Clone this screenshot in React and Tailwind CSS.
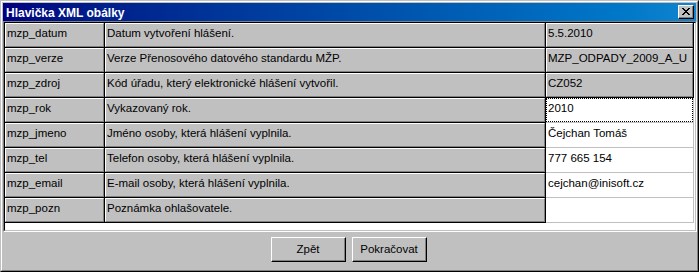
import React from "react";

const rows = [
  { k: "mzp_datum", d: "Datum vytvoření hlášení.", v: "5.5.2010", t: "fixed" },
  { k: "mzp_verze", d: "Verze Přenosového datového standardu MŽP.", v: "MZP_ODPADY_2009_A_U", t: "fixed" },
  { k: "mzp_zdroj", d: "Kód úřadu, který elektronické hlášení vytvořil.", v: "CZ052", t: "fixed" },
  { k: "mzp_rok", d: "Vykazovaný rok.", v: "2010", t: "focus" },
  { k: "mzp_jmeno", d: "Jméno osoby, která hlášení vyplnila.", v: "Čejchan Tomáš", t: "edit" },
  { k: "mzp_tel", d: "Telefon osoby, která hlášení vyplnila.", v: "777 665 154", t: "edit" },
  { k: "mzp_email", d: "E-mail osoby, která hlášení vyplnila.", v: "cejchan@inisoft.cz", t: "edit" },
  { k: "mzp_pozn", d: "Poznámka ohlašovatele.", v: "", t: "edit" },
];

function FixedCell({ w, children }) {
  return (
    <div className={`${w} h-[25px] border-r border-b border-black shrink-0`}>
      <div className="h-full bg-[#c0c0c0] border-t border-l border-t-white border-l-white border-r border-b border-r-[#808080] border-b-[#808080] pl-px pt-[2px] leading-[14px] whitespace-nowrap overflow-hidden">
        {children}
      </div>
    </div>
  );
}

function EditCell({ focus, children }) {
  return (
    <div className="w-[148px] h-[25px] border-r border-b border-[#c0c0c0] shrink-0 bg-white">
      {focus ? (
        <div className="h-full border border-dotted border-black pl-px pt-[2px] leading-[14px] whitespace-nowrap overflow-hidden">
          {children}
        </div>
      ) : (
        <div className="h-full pl-[2px] pt-[3px] leading-[14px] whitespace-nowrap overflow-hidden">
          {children}
        </div>
      )}
    </div>
  );
}

function Button({ children }) {
  return (
    <div className="w-[75px] h-[25px] border-t border-l border-t-white border-l-white border-r border-b border-r-black border-b-black">
      <div className="h-full border-r border-b border-r-[#808080] border-b-[#808080] flex items-center justify-center leading-[14px]">
        {children}
      </div>
    </div>
  );
}

function CloseGlyph() {
  const px = [
    [0, 0, 2], [6, 0, 2],
    [1, 1, 2], [5, 1, 2],
    [2, 2, 4],
    [3, 3, 2],
    [2, 4, 4],
    [1, 5, 2], [5, 5, 2],
    [0, 6, 2], [6, 6, 2],
  ];
  return (
    <svg width="8" height="7" viewBox="0 0 8 7" shapeRendering="crispEdges">
      {px.map(([x, y, w], i) => (
        <rect key={i} x={x} y={y} width={w} height={1} fill="#000" />
      ))}
    </svg>
  );
}

export default function App() {
  return (
    <div
      className="w-[699px] h-[272px] border border-t-[#c0c0c0] border-l-[#c0c0c0] border-r-black border-b-black text-[11.5px] text-black"
      style={{ fontFamily: '"Liberation Sans", Arial, sans-serif' }}
    >
      <div className="h-full border border-t-white border-l-white border-r-[#808080] border-b-[#808080] bg-[#c0c0c0] flex flex-col">
        {/* title bar */}
        <div className="ml-px mt-px w-[693px] h-[18px] shrink-0 bg-linear-to-r from-[#000080] to-[#1084d0] flex items-center justify-between pl-[3px] pr-[2px]">
          <span className="text-white font-bold text-[12px] leading-[18px] pt-px">Hlavička XML obálky</span>
          <div className="w-[16px] h-[14px] border-t border-l border-t-white border-l-white border-r border-b border-r-black border-b-black bg-[#c0c0c0]">
            <div className="h-full border-r border-b border-r-[#808080] border-b-[#808080] flex items-center justify-center pl-px">
              <CloseGlyph />
            </div>
          </div>
        </div>

        {/* grid */}
        <div className="ml-px w-[694px] h-[211px] shrink-0 border-t border-l border-t-[#808080] border-l-[#808080] border-r border-b border-r-white border-b-white">
          <div className="h-full border-t border-l border-t-black border-l-black border-r border-b border-r-[#c0c0c0] border-b-[#c0c0c0] bg-white flex flex-col">
            {rows.map((r) => (
              <div key={r.k} className="flex">
                <FixedCell w="w-[100px]">{r.k}</FixedCell>
                <FixedCell w="w-[441px]">{r.d}</FixedCell>
                {r.t === "fixed" ? (
                  <FixedCell w="w-[148px]">{r.v}</FixedCell>
                ) : (
                  <EditCell focus={r.t === "focus"}>{r.v}</EditCell>
                )}
              </div>
            ))}
          </div>
        </div>

        {/* buttons */}
        <div className="flex justify-center gap-[6px] mt-[5px] pr-px">
          <Button>Zpět</Button>
          <Button>Pokračovat</Button>
        </div>
      </div>
    </div>
  );
}
